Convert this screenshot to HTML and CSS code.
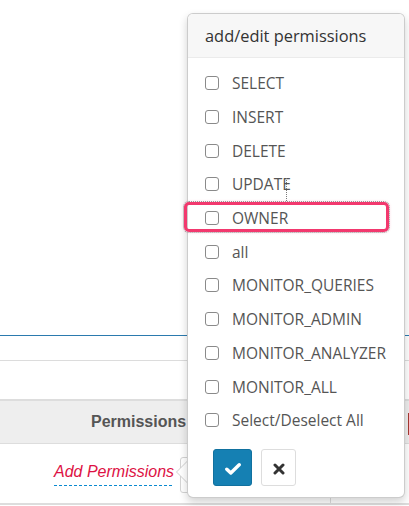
FILE: index.html
```html
<!DOCTYPE html>
<html>
<head>
<meta charset="utf-8">
<link rel="stylesheet" href="styles.css">
</head>
<body>
<div class="page">
  <div class="top-space"></div>
  <div class="rule-blue"></div>
  <div class="band"></div>
  <div class="rule-gray"></div>
  <div class="gap"></div>
  <div class="table">
    <div class="thead">
      <div class="th th-perm">Permissions</div>
      <div class="th th-next"><span class="red-mark"></span></div>
    </div>
    <div class="trow">
      <div class="td td-perm"><a class="editable">Add Permissions</a></div>
      <div class="td td-next"></div>
    </div>
  </div>
</div>

<div class="arrow-box"></div>
<div class="arrow"></div>

<div class="popover">
  <div class="popover-title">add/edit permissions</div>
  <div class="popover-body">
    <ul class="checklist">
      <li><span class="cb"></span><span>SELECT</span></li>
      <li><span class="cb"></span><span>INSERT</span></li>
      <li><span class="cb"></span><span>DELETE</span></li>
      <li><span class="cb"></span><span>UPDATE</span></li>
      <li><span class="cb"></span><span>OWNER</span></li>
      <li><span class="cb"></span><span>all</span></li>
      <li><span class="cb"></span><span>MONITOR_QUERIES</span></li>
      <li><span class="cb"></span><span>MONITOR_ADMIN</span></li>
      <li><span class="cb"></span><span>MONITOR_ANALYZER</span></li>
      <li><span class="cb"></span><span>MONITOR_ALL</span></li>
      <li><span class="cb"></span><span>Select/Deselect All</span></li>
    </ul>
    <div class="buttons">
      <button class="btn btn-ok"><svg width="16" height="12" viewBox="0 0 16 12"><path d="M1.8 6.2 L5.8 10 L14.2 1.8" fill="none" stroke="#fff" stroke-width="3.4" stroke-linecap="round" stroke-linejoin="round"/></svg></button>
      <button class="btn btn-cancel"><svg width="12" height="12" viewBox="0 0 12 12"><path d="M2 2 L10 10 M10 2 L2 10" fill="none" stroke="#333" stroke-width="3" stroke-linecap="round"/></svg></button>
    </div>
  </div>
</div>

<div class="guide-line"></div>
<div class="highlight"></div>
</body>
</html>
```

FILE: styles.css
```css
html, body {
  margin: 0;
  padding: 0;
  background: #fff;
  overflow: hidden;
}
body {
  width: 409px;
  height: 506px;
  position: relative;
  font-family: "Liberation Sans", Arial, sans-serif;
}
.page {
  display: flex;
  flex-direction: column;
}
.top-space { height: 335px; }
.rule-blue { height: 1px; background: #2b7aae; }
.band { height: 24px; }
.rule-gray { height: 1px; background: #dcdcdc; }
.gap { height: 38px; }

.table {
  border-top: 2px solid #dddddd;
  border-bottom: 2px solid #dddddd;
}
.thead {
  display: grid;
  grid-template-columns: 331px 1fr;
  height: 42px;
  background: #eeeeee;
  border-bottom: 1px solid #dddddd;
}
.th {
  display: flex;
  align-items: center;
  font-weight: bold;
  font-size: 16px;
  color: #555;
}
.th-perm { padding-left: 91px; }
.th-next { justify-content: flex-end; }
.red-mark {
  width: 1.5px;
  height: 22px;
  background: #a63a32;
  margin-top: 4px;
}
.trow {
  display: grid;
  grid-template-columns: 331px 1fr;
  height: 59px;
}
.td-perm {
  border-right: 1px solid #dddddd;
  padding-left: 54px;
  padding-top: 19px;
}
.editable {
  display: inline-block;
  font-style: italic;
  font-size: 16px;
  line-height: 18px;
  color: #dd1144;
  padding-bottom: 5px;
  background-image: repeating-linear-gradient(to right, #0a8ad0 0 3px, transparent 3px 5px);
  background-size: 100% 1px;
  background-repeat: no-repeat;
  background-position: left bottom;
}

.arrow-box {
  position: absolute;
  left: 180px;
  top: 457px;
  width: 12px;
  height: 34px;
  border: 1px solid #d4d4d4;
  border-radius: 3px;
  background: #fff;
}
.arrow {
  position: absolute;
  left: 176px;
  top: 460px;
  width: 0;
  height: 0;
  border-top: 12px solid transparent;
  border-bottom: 12px solid transparent;
  border-right: 12px solid #cfcfcf;
}
.arrow::after {
  content: "";
  position: absolute;
  left: 1px;
  top: -11px;
  border-top: 11px solid transparent;
  border-bottom: 11px solid transparent;
  border-right: 11px solid #fff;
}

.popover {
  position: absolute;
  left: 187px;
  top: 13px;
  width: 218px;
  height: 485px;
  box-sizing: border-box;
  background: #fff;
  border: 1px solid rgba(0, 0, 0, 0.2);
  border-radius: 6px;
  box-shadow: 0 4px 8px rgba(0, 0, 0, 0.18);
  font-family: "Open Sans", "Noto Sans", sans-serif;
  display: flex;
  flex-direction: column;
}
.popover-title {
  height: 43px;
  background: #f7f7f7;
  border-bottom: 1px solid #ebebeb;
  border-radius: 5px 5px 0 0;
  display: flex;
  align-items: center;
  padding-left: 17px;
  font-size: 16.4px;
  color: #333;
}
.popover-body {
  padding: 8.5px 0 0 17px;
}
.checklist {
  list-style: none;
  margin: 0;
  padding: 0;
}
.checklist li {
  height: 33.7px;
  display: flex;
  align-items: center;
  gap: 13px;
  font-size: 15.5px;
  color: #555;
}
.cb {
  width: 12px;
  height: 12px;
  border: 1px solid #8a8a8a;
  border-radius: 3px;
  flex: none;
}
.buttons {
  display: flex;
  gap: 9px;
  margin-top: 11.5px;
  padding-left: 8px;
}
.btn {
  height: 37px;
  padding: 0;
  border-radius: 3px;
  display: flex;
  align-items: center;
  justify-content: center;
  cursor: pointer;
}
.btn svg { margin-top: 4px; }
.btn-ok {
  width: 39px;
  background: #1580b3;
  border: 1px solid #11719f;
}
.btn-cancel {
  width: 35px;
  background: #fff;
  border: 1px solid #dddddd;
}

.guide-line {
  position: absolute;
  left: 286px;
  top: 178px;
  height: 25px;
  border-left: 1px dotted #7a7a7a;
}
.highlight {
  position: absolute;
  left: 184px;
  top: 202px;
  width: 205px;
  height: 30px;
  box-sizing: border-box;
  border: 3px solid #f2386e;
  border-radius: 5px;
  box-shadow: 0 0 3px rgba(242, 56, 110, 0.35);
  outline: 1px dotted #9a9a9a;
  outline-offset: 0px;
}
```
